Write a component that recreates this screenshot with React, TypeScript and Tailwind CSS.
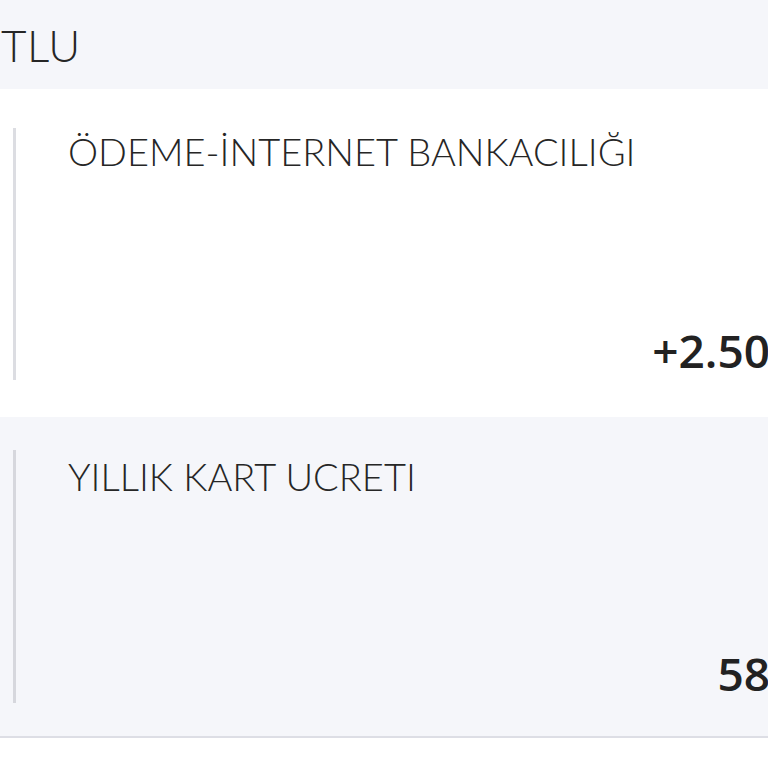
const transactions = [
  {
    id: 1,
    title: 'ÖDEME-İNTERNET BANKACILIĞI',
    amount: '+2.50',
    bg: 'bg-white',
    pad: 'pt-[39px] pb-[37px]',
    titleGap: 'mt-[4px]',
    line: 'border-[#dcdde2]',
    height: 'h-[252px]',
  },
  {
    id: 2,
    title: 'YILLIK KART UCRETI',
    amount: '58',
    bg: 'bg-[#f5f6fa] border-b-2 border-[#dddee5]',
    pad: 'pt-[33px] pb-[33px]',
    titleGap: 'mt-[7px]',
    line: 'border-[#d6d7dd]',
    height: 'h-[253px]',
  },
];

export default function App() {
  return (
    <div className="w-[768px] h-[768px] overflow-hidden bg-white text-[#262626]">
      {/* currency header */}
      <div className="h-[89px] bg-[#f5f6fa] flex items-center pl-[1px]">
        <span className="font-['Lato',sans-serif] text-[44px] leading-none font-light tracking-[0.5px]">
          TLU
        </span>
      </div>

      {transactions.map((t) => (
        <div key={t.id} className={`${t.bg} ${t.pad} pl-[13px]`}>
          <div className={`${t.height} border-l-[3px] ${t.line} flex flex-col justify-between`}>
            <div
              className={`${t.titleGap} pl-[52px] font-['Lato',sans-serif] text-[38px] leading-none font-light whitespace-nowrap`}
            >
              {t.title}
            </div>
            <div className="mb-[7px] flex justify-end -mr-[2px] font-['Open_Sans',sans-serif] text-[46px] leading-none font-semibold text-[#222] whitespace-nowrap">
              {t.amount}
            </div>
          </div>
        </div>
      ))}
    </div>
  );
}
